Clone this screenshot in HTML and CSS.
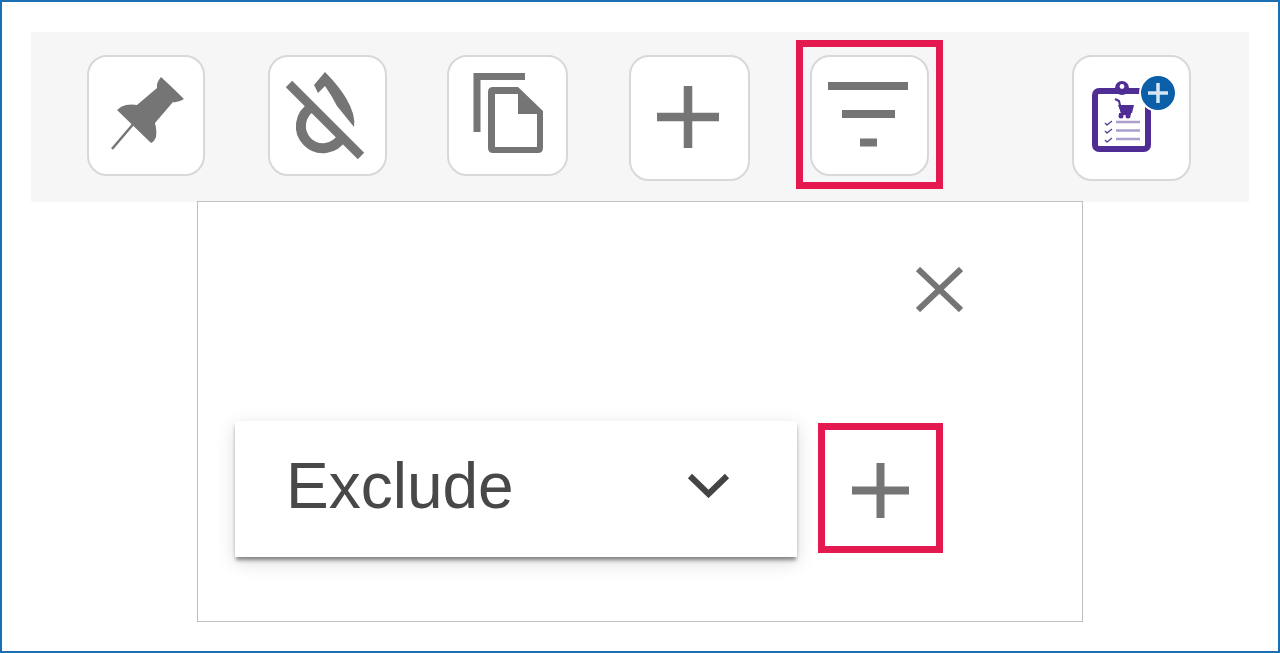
FILE: index.html
```html
<!DOCTYPE html>
<html lang="en">
<head>
    <meta charset="UTF-8">
    <meta name="viewport" content="width=device-width, initial-scale=1.0">
    <title>Filter toolbar</title>
    <link rel="stylesheet" href="styles.css">
</head>
<body>
    <div class="frame">
        <!-- Toolbar -->
        <div class="toolbar">
            <button class="tool-btn pin-btn" aria-label="Pin">
                <svg class="icon" viewBox="2 2 114 117">
                    <path class="line" stroke-width="2.5" d="M48 67 L25 94"/>
                    <path class="solid" d="M74 22 Q86 33 97 44 Q91 48 86 47 L68 68 Q70 76 69 82 Q67 87 64 88 L30 55 Q34 51 39 50 Q45 49 50 50 L70 33 Q69 28 74 22 Z"/>
                </svg>
            </button>
            <button class="tool-btn unpin-btn" aria-label="Hide">
                <svg class="icon" viewBox="2 2 115 117">
                    <path class="solid" d="M57 17 L46 30 L50 38 L57 31 Q64 41 69 51 L86 72 Q88 60 78 43 Q70 30 57 17 Z"/>
                    <path class="line" stroke-width="10" d="M44 52 A22 22 0 1 0 74 82"/>
                    <path class="line" stroke-width="9" d="M21 29 L93 101"/>
                </svg>
            </button>
            <button class="tool-btn copy-btn" aria-label="Copy">
                <svg class="icon" viewBox="2 2 117 117">
                    <path class="line" stroke-width="7" d="M78 21.5 H30 V77"/>
                    <path class="solid" fill-rule="evenodd" d="M46 32 H71 L96 56 V93 Q96 98 91 98 H46 Q41 98 41 93 V37 Q41 32 46 32 Z M48 39 V92 H90 V59 H71 V39 Z"/>
                </svg>
            </button>
            <button class="tool-btn add-btn" aria-label="Add">
                <svg class="icon" viewBox="2 2 117 122">
                    <path class="line" stroke-width="8.5" d="M59 31 V93 M28 62 H90"/>
                </svg>
            </button>
            <button class="tool-btn filter-btn" aria-label="Filter">
                <svg class="icon" viewBox="2 2 115 117">
                    <path class="line" stroke-width="8" d="M18 31 H98 M32 59 H85 M50 87.5 H67"/>
                </svg>
                <span class="highlight"></span>
            </button>
            <button class="tool-btn cart-btn" aria-label="Add to cart list">
                <svg class="icon" viewBox="2 2 115 122">
                    <rect class="board" x="23" y="36" width="53" height="58" rx="4"/>
                    <circle class="clip" cx="50" cy="33" r="7"/>
                    <rect class="clip" x="37" y="33" width="26" height="5"/>
                    <circle class="clip-hole" cx="50" cy="31.5" r="2.4"/>
                    <path class="cart-line" d="M43 44 L47 46 L50 58"/>
                    <path class="cart-fill" d="M46 50 H62 L60 58 H49 Z"/>
                    <rect class="cart-fill" x="47" y="58" width="12" height="2"/>
                    <circle class="cart-fill" cx="49" cy="61" r="2.5"/>
                    <circle class="cart-fill" cx="56" cy="61" r="2.5"/>
                    <path class="check" d="M33 68 L35 70 L40 66 M33 76 L35 78 L40 74 M33 85 L35 87 L40 83"/>
                    <path class="list-line" d="M44 67 H68 M44 75.5 H68 M44 84 H68"/>
                    <circle class="badge-ring" cx="86" cy="38" r="19"/>
                    <circle class="badge" cx="86" cy="38" r="17"/>
                    <path class="badge-plus" d="M86 28 V48 M76 38 H96"/>
                </svg>
            </button>
        </div>

        <!-- Filter panel -->
        <div class="panel">
            <button class="close-btn" aria-label="Close">
                <svg class="close-icon" viewBox="0 0 47 45">
                    <path class="line" stroke-width="6" d="M2 2 L45 43 M45 2 L2 43"/>
                </svg>
            </button>
            <div class="filter-row">
                <div class="select">
                    <span class="select-label">Exclude</span>
                    <svg class="chevron" viewBox="0 0 43 26">
                        <path d="M3 4 L21.5 22 L40 4"/>
                    </svg>
                </div>
                <button class="row-add" aria-label="Add filter">
                    <svg class="row-plus" viewBox="0 0 57 55">
                        <path class="line" stroke-width="8" d="M28.5 0 V55 M0 27.5 H57"/>
                    </svg>
                </button>
            </div>
        </div>
    </div>
</body>
</html>
```
FILE: styles.css
```css
* {
    margin: 0;
    padding: 0;
    box-sizing: border-box;
    font-family: 'Liberation Sans', Arial, sans-serif;
}

body {
    background-color: white;
}

.frame {
    height: 653px;
    padding: 30px 29px 0;
    border: 2px solid #1b6fb2;
    overflow: hidden;
}

/* Toolbar */
.toolbar {
    display: flex;
    align-items: flex-start;
    gap: 60px;
    height: 170px;
    padding: 23px 58px 0 56px;
    background-color: #f6f6f6;
}

.tool-btn {
    position: relative;
    width: 119px;
    height: 121px;
    background-color: white;
    border: 2px solid #d8d8d8;
    border-radius: 20px;
}

.pin-btn {
    width: 118px;
}

.unpin-btn {
    margin-left: 3px;
}

.copy-btn {
    width: 121px;
}

.add-btn {
    width: 121px;
    height: 126px;
    margin-left: 1px;
}

.cart-btn {
    height: 126px;
    margin-left: auto;
}

.icon {
    display: block;
    width: 100%;
    height: 100%;
    filter: blur(0.5px);
}

.solid {
    fill: #757575;
}

.line {
    fill: none;
    stroke: #757575;
}

/* Red callouts */
.highlight {
    position: absolute;
    top: -17px;
    right: -16px;
    bottom: -15px;
    left: -16px;
    border: 7px solid #e4194f;
}

/* Clipboard icon */
.board {
    fill: white;
    stroke: #4f2d95;
    stroke-width: 6;
}

.clip {
    fill: #4f2d95;
}

.clip-hole {
    fill: white;
}

.cart-line {
    fill: none;
    stroke: #4f2d95;
    stroke-width: 2;
}

.cart-fill {
    fill: #4f2d95;
}

.check {
    fill: none;
    stroke: #5b4a9a;
    stroke-width: 1.5;
}

.list-line {
    fill: none;
    stroke: #ab9fd0;
    stroke-width: 2.5;
}

.badge-ring {
    fill: white;
}

.badge {
    fill: #0b5ea8;
}

.badge-plus {
    fill: none;
    stroke: #d5e6f3;
    stroke-width: 3.5;
}

/* Panel */
.panel {
    display: flex;
    flex-direction: column;
    width: 886px;
    height: 421px;
    margin: -1px 0 0 166px;
    padding: 65px 119px 0 37px;
    background-color: white;
    border: 1px solid #c0c0c0;
}

.close-btn {
    align-self: flex-end;
    width: 47px;
    height: 45px;
    background: none;
    border: none;
}

.close-icon {
    display: block;
    width: 47px;
    height: 45px;
    filter: blur(0.5px);
}

.filter-row {
    display: flex;
    align-items: flex-start;
    margin-top: 109px;
}

.select {
    display: flex;
    justify-content: space-between;
    align-items: center;
    width: 562px;
    height: 136px;
    padding: 0 67px 0 51px;
    background-color: white;
    box-shadow: 0 4px 4px -1px rgba(0, 0, 0, 0.45), 0 5px 18px rgba(0, 0, 0, 0.14);
}

.select-label {
    padding-bottom: 7px;
    font-size: 64px;
    color: #484848;
    filter: blur(0.5px);
}

.chevron {
    width: 43px;
    height: 26px;
    margin-top: -8px;
    filter: blur(0.5px);
}

.chevron path {
    fill: none;
    stroke: #444444;
    stroke-width: 6;
}

.row-add {
    display: flex;
    justify-content: center;
    align-items: center;
    width: 125px;
    height: 130px;
    margin: 2px 0 0 21px;
    padding-top: 5px;
    background: none;
    border: 7px solid #e4194f;
}

.row-plus {
    width: 57px;
    height: 55px;
    filter: blur(0.5px);
}
```
